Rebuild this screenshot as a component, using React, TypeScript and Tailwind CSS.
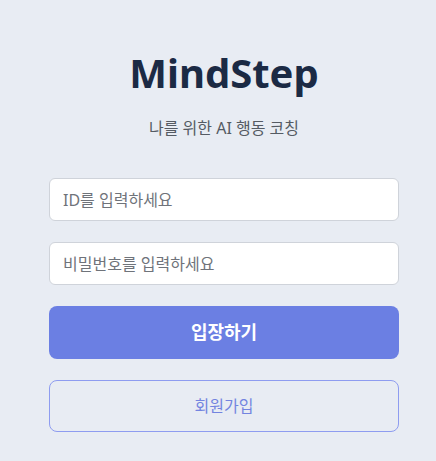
import React, { useState } from 'react';

const font = { fontFamily: '"Noto Sans", "Noto Sans CJK KR", sans-serif' };

export default function App() {
  const [id, setId] = useState('');
  const [pw, setPw] = useState('');

  return (
    <div className="min-h-screen w-full overflow-hidden bg-[#e8ecf3]" style={font}>
      {/* content column, centred at x=224 */}
      <div className="w-[448px] px-[49px] pt-[45px] flex flex-col">
        <h1 className="text-center text-[40px] leading-[56px] font-bold text-[#1b2a44]">MindStep</h1>
        <p className="mt-[16px] text-center text-[16px] leading-[22px] text-[#555b63]">나를 위한 AI 행동 코칭</p>

        <div className="mt-[39px] flex flex-col gap-[21px]">
          <input
            value={id}
            onChange={(e) => setId(e.target.value)}
            placeholder="ID를 입력하세요"
            className="h-[43px] w-full rounded-[6px] border border-[#cfd3da] bg-white px-[13px] text-[16px] text-[#333] placeholder:text-[#6f737a] outline-none"
          />
          <input
            type="password"
            value={pw}
            onChange={(e) => setPw(e.target.value)}
            placeholder="비밀번호를 입력하세요"
            className="h-[43px] w-full rounded-[6px] border border-[#cfd3da] bg-white px-[13px] text-[16px] text-[#333] placeholder:text-[#6f737a] outline-none"
          />
        </div>

        <button className="mt-[21px] h-[53px] w-full rounded-[8px] bg-[#6b7fe3] text-[18px] font-bold text-white">
          입장하기
        </button>
        <button className="mt-[21px] h-[52px] w-full rounded-[8px] border border-[#8e9cf0] bg-transparent text-[16px] text-[#7384e0]">
          회원가입
        </button>
      </div>
    </div>
  );
}
